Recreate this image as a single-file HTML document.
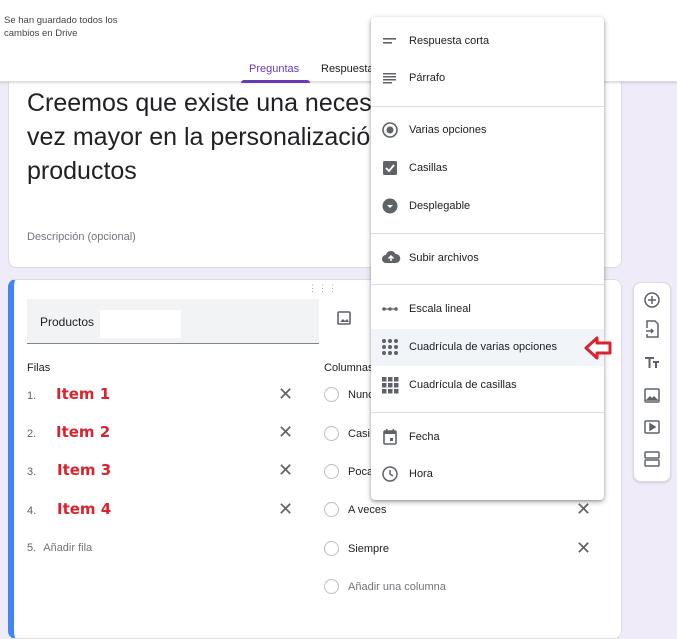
<!DOCTYPE html>
<html><head><meta charset="utf-8"><style>
*{margin:0;padding:0;box-sizing:border-box}
body{width:677px;height:610px;overflow:hidden;background:#f0ebf8;font-family:"Liberation Sans",sans-serif;color:#202124;position:relative}
.a{position:absolute}
.hdr{left:0;top:0;width:677px;height:82px;background:#fff;border-bottom:1px solid #ddd;box-shadow:0 1px 2px rgba(0,0,0,.15)}
.card{background:#fff;border-radius:8px;border:1px solid #dadce0}
.menu{left:371px;top:17px;width:233px;height:483px;background:#fff;border-radius:4px;box-shadow:0 2px 6px rgba(0,0,0,.3),0 1px 2px rgba(0,0,0,.2)}
.mi{position:absolute;left:0;width:233px;height:37px;font-size:11px;color:#202124}
.mi span{position:absolute;left:38px;top:12px}
.mi svg{position:absolute;left:10px;top:9px}
.dv{position:absolute;left:0;width:233px;height:1px;background:#dadce0}
.item{font-family:"DejaVu Sans",sans-serif;font-weight:bold;color:#d9232e;font-size:15px}
.num{font-size:11px;color:#5f6368}
.x{font-size:18px;color:#5f6368}
.rad{width:15px;height:15px;border:1.5px solid #bdbdbd;border-radius:50%}
.col{font-size:11px;color:#202124}
</style></head><body>
<div class="a card" style="left:8px;top:70px;width:614px;height:198px;border-top:none;border-radius:0 0 8px 8px"></div>
<div class="a hdr"></div>
<div class="a" style="left:4px;top:14px;font-size:9.5px;color:#444;line-height:13px">Se han guardado todos los<br>cambios en Drive</div>
<div class="a" style="left:249px;top:63px;font-size:11px;color:#673ab7">Preguntas</div>
<div class="a" style="left:241px;top:80px;width:69px;height:3px;background:#673ab7;border-radius:3px 3px 0 0"></div>
<div class="a" style="left:321px;top:63px;font-size:11px;color:#202124">Respuestas</div>

<div class="a" style="left:27px;top:86px;font-size:25px;line-height:34px;color:#202124;width:600px">Creemos que existe una necesidad cada<br>vez mayor en la personalización de<br>productos</div>
<div class="a" style="left:27px;top:231px;font-size:11px;color:#70757a">Descripción (opcional)</div>

<div class="a card" style="left:8px;top:279px;width:614px;height:360px;border-left:6px solid #4285f4"></div>
<div class="a" style="left:308px;top:283px;font-size:9px;color:#aaa;letter-spacing:1px">⋮⋮⋮</div>
<div class="a" style="left:27px;top:299px;width:292px;height:45px;background:#f1f3f4;border-bottom:1px solid #80868b"></div>
<div class="a" style="left:100px;top:310px;width:81px;height:28px;background:#fff"></div>
<div class="a" style="left:40px;top:315px;font-size:12px">Productos</div>
<svg class="a" style="left:336px;top:310px" width="16" height="16" viewBox="0 0 16 16"><rect x="2" y="2" width="12" height="12" rx="1" fill="none" stroke="#5f6368" stroke-width="1.6"/><path d="M4 12l3-3 2 2 2-2 2 3z" fill="#5f6368"/></svg>
<div class="a" style="left:27px;top:362px;font-size:11px">Filas</div>
<div class="a" style="left:324px;top:362px;font-size:11px">Columnas</div>

<div class="a num" style="left:27px;top:390px">1.</div><div class="a item" style="left:56px;top:385px">Item 1</div><div class="a x" style="left:278px;top:384px">✕</div>
<div class="a num" style="left:27px;top:428px">2.</div><div class="a item" style="left:56px;top:423px">Item 2</div><div class="a x" style="left:278px;top:422px">✕</div>
<div class="a num" style="left:27px;top:466px">3.</div><div class="a item" style="left:57px;top:461px">Item 3</div><div class="a x" style="left:278px;top:460px">✕</div>
<div class="a num" style="left:27px;top:505px">4.</div><div class="a item" style="left:57px;top:500px">Item 4</div><div class="a x" style="left:278px;top:499px">✕</div>
<div class="a num" style="left:27px;top:542px">5. <span style="margin-left:4px;color:#70757a">Añadir fila</span></div>

<div class="a rad" style="left:324px;top:387px"></div><div class="a col" style="left:348px;top:389px">Nunca</div>
<div class="a rad" style="left:324px;top:426px"></div><div class="a col" style="left:348px;top:428px">Casi</div>
<div class="a rad" style="left:324px;top:464px"></div><div class="a col" style="left:348px;top:466px">Poca</div>
<div class="a rad" style="left:324px;top:502px"></div><div class="a col" style="left:348px;top:504px">A veces</div><div class="a x" style="left:576px;top:499px">✕</div>
<div class="a rad" style="left:324px;top:541px"></div><div class="a col" style="left:348px;top:543px">Siempre</div><div class="a x" style="left:576px;top:538px">✕</div>
<div class="a rad" style="left:324px;top:579px"></div><div class="a col" style="left:348px;top:581px;color:#70757a">Añadir una columna</div>

<div class="a card" style="left:633px;top:282px;width:38px;height:200px;box-shadow:0 1px 2px rgba(0,0,0,.15)"></div>
<svg class="a" style="left:642px;top:291px" width="20" height="182" viewBox="0 0 20 182" fill="none" stroke="#5f6368" stroke-width="1.5">
<circle cx="10" cy="9" r="7"/><path d="M10 5v8M6 9h8"/>
<path d="M5 37v-7h8l3 3v13H5v-3M4 40h7M9 38l2 2-2 2"/>
<path d="M3 67h9M7.5 67v10M11 71h6M14 71v6" stroke-width="2"/>
<rect x="3" y="98" width="14" height="13" rx="1"/><path d="M5 109l3-3 2 2 2-2 3 3z" fill="#5f6368"/>
<rect x="3" y="130" width="14" height="12" rx="1"/><path d="M8 133v6l5-3z" fill="#5f6368"/>
<rect x="3" y="161" width="14" height="6" rx="1"/><rect x="3" y="169" width="14" height="6" rx="1"/>
</svg>

<div class="a menu">
<div class="mi" style="top:6px"><svg width="18" height="18" viewBox="0 0 18 18" fill="#5f6368"><rect x="2" y="6" width="13" height="1.6"/><rect x="2" y="10" width="9" height="1.6"/></svg><span>Respuesta corta</span></div>
<div class="mi" style="top:43px"><svg width="18" height="18" viewBox="0 0 18 18" fill="#5f6368"><rect x="2" y="4" width="13" height="1.5"/><rect x="2" y="7" width="13" height="1.5"/><rect x="2" y="10" width="13" height="1.5"/><rect x="2" y="13" width="9" height="1.5"/></svg><span>Párrafo</span></div>
<div class="dv" style="top:89px"></div>
<div class="mi" style="top:95px"><svg width="18" height="18" viewBox="0 0 18 18"><circle cx="9" cy="9" r="7" fill="none" stroke="#5f6368" stroke-width="1.6"/><circle cx="9" cy="9" r="3.5" fill="#5f6368"/></svg><span>Varias opciones</span></div>
<div class="mi" style="top:133px"><svg width="18" height="18" viewBox="0 0 18 18"><rect x="2" y="2" width="14" height="14" rx="1.5" fill="#5f6368"/><path d="M5 9l3 3 5-6" stroke="#fff" stroke-width="1.8" fill="none"/></svg><span>Casillas</span></div>
<div class="mi" style="top:171px"><svg width="18" height="18" viewBox="0 0 18 18"><circle cx="9" cy="9" r="7.5" fill="#5f6368"/><path d="M6 8h6l-3 3z" fill="#fff"/></svg><span>Desplegable</span></div>
<div class="dv" style="top:216px"></div>
<div class="mi" style="top:223px"><svg width="20" height="18" viewBox="0 0 20 18"><path d="M5 14a4 4 0 0 1 0-8 5 5 0 0 1 9.5-1 4 4 0 0 1 .5 9z" fill="#5f6368"/><path d="M10 12V7M7.5 9.5L10 7l2.5 2.5" stroke="#fff" stroke-width="1.5" fill="none"/></svg><span>Subir archivos</span></div>
<div class="dv" style="top:267px"></div>
<div class="mi" style="top:274px"><svg width="18" height="18" viewBox="0 0 18 18" fill="#5f6368"><circle cx="3" cy="9" r="1.8"/><circle cx="9" cy="9" r="1.8"/><circle cx="15" cy="9" r="1.8"/><rect x="3" y="8.4" width="12" height="1.2"/></svg><span>Escala lineal</span></div>
<div class="mi" style="top:312px;background:#f1f4f9"><svg width="18" height="18" viewBox="0 0 18 18" fill="#5f6368"><circle cx="3" cy="3" r="2"/><circle cx="9" cy="3" r="2"/><circle cx="15" cy="3" r="2"/><circle cx="3" cy="9" r="2"/><circle cx="9" cy="9" r="2"/><circle cx="15" cy="9" r="2"/><circle cx="3" cy="15" r="2"/><circle cx="9" cy="15" r="2"/><circle cx="15" cy="15" r="2"/></svg><span>Cuadrícula de varias opciones</span></div>
<div class="mi" style="top:350px"><svg width="18" height="18" viewBox="0 0 18 18" fill="#5f6368"><rect x="1" y="1" width="4.5" height="4.5"/><rect x="7" y="1" width="4.5" height="4.5"/><rect x="13" y="1" width="4.5" height="4.5"/><rect x="1" y="7" width="4.5" height="4.5"/><rect x="7" y="7" width="4.5" height="4.5"/><rect x="13" y="7" width="4.5" height="4.5"/><rect x="1" y="13" width="4.5" height="4.5"/><rect x="7" y="13" width="4.5" height="4.5"/><rect x="13" y="13" width="4.5" height="4.5"/></svg><span>Cuadrícula de casillas</span></div>
<div class="dv" style="top:395px"></div>
<div class="mi" style="top:402px"><svg width="18" height="18" viewBox="0 0 18 18"><rect x="3" y="3" width="12" height="13" rx="1" fill="none" stroke="#5f6368" stroke-width="1.6"/><rect x="3" y="3" width="12" height="3" fill="#5f6368"/><rect x="5" y="1" width="1.5" height="3" fill="#5f6368"/><rect x="11.5" y="1" width="1.5" height="3" fill="#5f6368"/><rect x="9" y="10" width="3" height="3" fill="#5f6368"/></svg><span>Fecha</span></div>
<div class="mi" style="top:439px"><svg width="18" height="18" viewBox="0 0 18 18" fill="none" stroke="#5f6368" stroke-width="1.5"><circle cx="9" cy="9" r="7"/><path d="M9 5v4l3 2"/></svg><span>Hora</span></div>
</div>

<svg class="a" style="left:583px;top:335px" width="30" height="26" viewBox="0 0 30 26"><path d="M3 13L14 3v5h13v10H14v5z" fill="#fff" stroke="#d9232e" stroke-width="3" stroke-linejoin="round"/></svg>
</body></html>
